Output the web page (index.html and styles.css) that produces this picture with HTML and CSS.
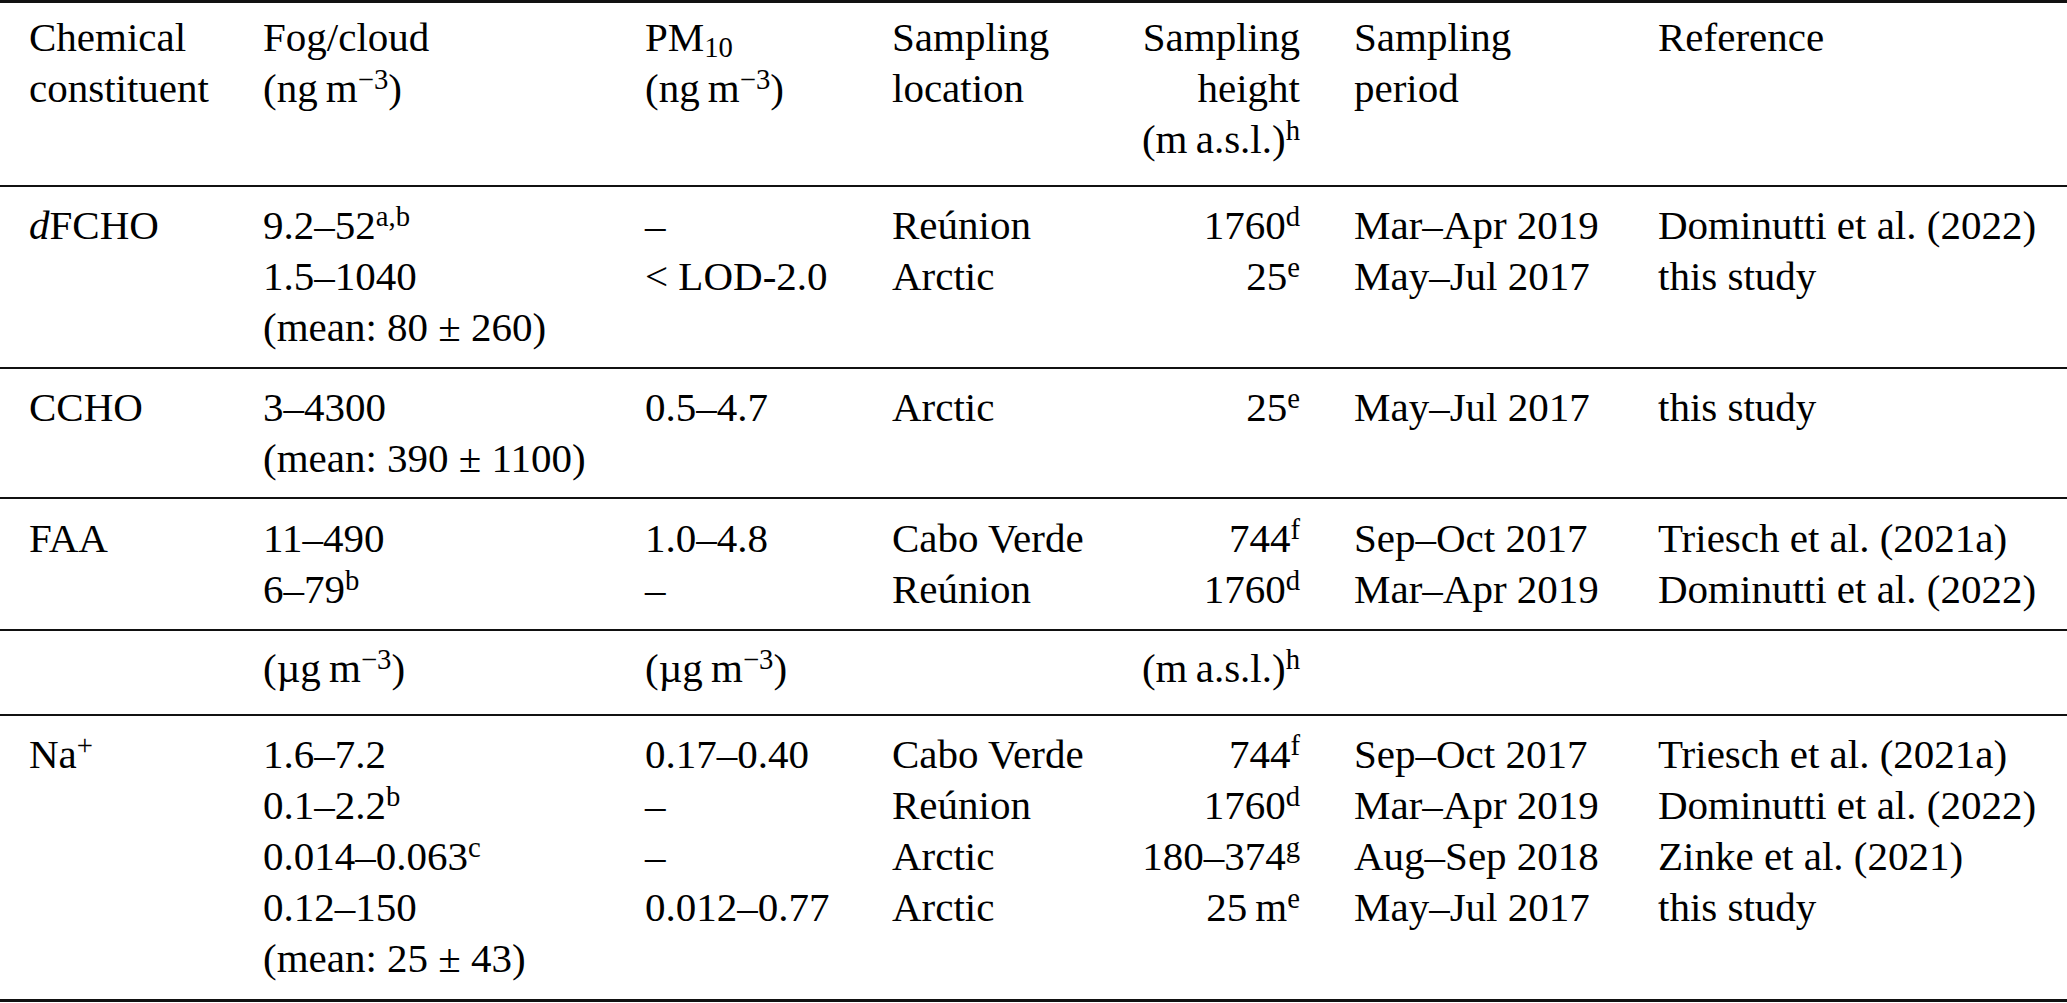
FILE: index.html
```html
<!DOCTYPE html>
<html lang="en">
<head>
<meta charset="utf-8">
<title>Table</title>
<link rel="stylesheet" href="styles.css">
</head>
<body>
<table class="data">
  <colgroup>
    <col class="c1"><col class="c2"><col class="c3"><col class="c4"><col class="c5"><col class="c6"><col class="c7">
  </colgroup>
  <thead>
    <tr>
      <td>Chemical<br>constituent</td>
      <td>Fog/cloud<br>(ng&#8201;m<sup>&minus;3</sup>)</td>
      <td>PM<sub>10</sub><br>(ng&#8201;m<sup>&minus;3</sup>)</td>
      <td>Sampling<br>location</td>
      <td class="num">Sampling<br>height<br>(m&#8201;a.s.l.)<sup>h</sup></td>
      <td>Sampling<br>period</td>
      <td>Reference</td>
    </tr>
  </thead>
  <tbody>
    <tr class="r-dfcho">
      <td><i>d</i>FCHO</td>
      <td>9.2–52<sup>a,b</sup><br>1.5–1040<br>(mean: 80 ± 260)</td>
      <td>–<br>&lt; LOD-2.0</td>
      <td>Reúnion<br>Arctic</td>
      <td class="num">1760<sup>d</sup><br>25<sup>e</sup></td>
      <td>Mar–Apr 2019<br>May–Jul 2017</td>
      <td>Dominutti et al. (2022)<br>this study</td>
    </tr>
    <tr class="r-ccho">
      <td>CCHO</td>
      <td>3–4300<br>(mean: 390 ± 1100)</td>
      <td>0.5–4.7</td>
      <td>Arctic</td>
      <td class="num">25<sup>e</sup></td>
      <td>May–Jul 2017</td>
      <td>this study</td>
    </tr>
    <tr class="r-faa">
      <td>FAA</td>
      <td>11–490<br>6–79<sup>b</sup></td>
      <td>1.0–4.8<br>–</td>
      <td>Cabo Verde<br>Reúnion</td>
      <td class="num">744<sup>f</sup><br>1760<sup>d</sup></td>
      <td>Sep–Oct 2017<br>Mar–Apr 2019</td>
      <td>Triesch et al. (2021a)<br>Dominutti et al. (2022)</td>
    </tr>
    <tr class="units">
      <td></td>
      <td>(µg&#8201;m<sup>&minus;3</sup>)</td>
      <td>(µg&#8201;m<sup>&minus;3</sup>)</td>
      <td></td>
      <td class="num">(m&#8201;a.s.l.)<sup>h</sup></td>
      <td></td>
      <td></td>
    </tr>
    <tr class="last">
      <td>Na<sup>+</sup></td>
      <td>1.6–7.2<br>0.1–2.2<sup>b</sup><br>0.014–0.063<sup>c</sup><br>0.12–150<br>(mean: 25 ± 43)</td>
      <td>0.17–0.40<br>–<br>–<br>0.012–0.77</td>
      <td>Cabo Verde<br>Reúnion<br>Arctic<br>Arctic</td>
      <td class="num">744<sup>f</sup><br>1760<sup>d</sup><br>180–374<sup>g</sup><br>25&#8201;m<sup>e</sup></td>
      <td>Sep–Oct 2017<br>Mar–Apr 2019<br>Aug–Sep 2018<br>May–Jul 2017</td>
      <td>Triesch et al. (2021a)<br>Dominutti et al. (2022)<br>Zinke et al. (2021)<br>this study</td>
    </tr>
  </tbody>
</table>
</body>
</html>
```

FILE: styles.css
```css
html, body {
  margin: 0;
  padding: 0;
  background: #ffffff;
  overflow: hidden;
}

body {
  font-family: "Liberation Serif", "Times New Roman", serif;
  font-size: 41px;
  color: #000000;
}

.data {
  width: 2067px;
  border-collapse: collapse;
  table-layout: fixed;
  border-top: 3px solid #111111;
  border-bottom: 3px solid #111111;
}

.c1 { width: 236px; }
.c2 { width: 382px; }
.c3 { width: 247px; }
.c4 { width: 248px; }
.c5 { width: 214px; }
.c6 { width: 304px; }
.c7 { width: 436px; }

.data td {
  padding: 13px 27px;
  vertical-align: top;
  text-align: left;
  line-height: 51px;
  white-space: nowrap;
}

.data td:first-child { padding-left: 29px; }
.data td:last-child { padding-right: 30px; }

.data td.num { text-align: right; }

.data thead td {
  padding-top: 9px;
  padding-bottom: 20px;
}

.data tbody tr {
  border-top: 2px solid #111111;
}

.data tr.r-dfcho td {
  padding-top: 13px;
  padding-bottom: 14px;
}

.data tr.r-faa td {
  padding-top: 14px;
  padding-bottom: 14px;
}

.data tr.units td {
  padding-top: 12px;
  padding-bottom: 20px;
}

.data tr.last td {
  padding-top: 13px;
  padding-bottom: 15px;
}

sup {
  font-size: 0.7em;
  line-height: 0;
  vertical-align: 0.45em;
}

sub {
  font-size: 0.7em;
  line-height: 0;
  vertical-align: -0.2em;
}
```
